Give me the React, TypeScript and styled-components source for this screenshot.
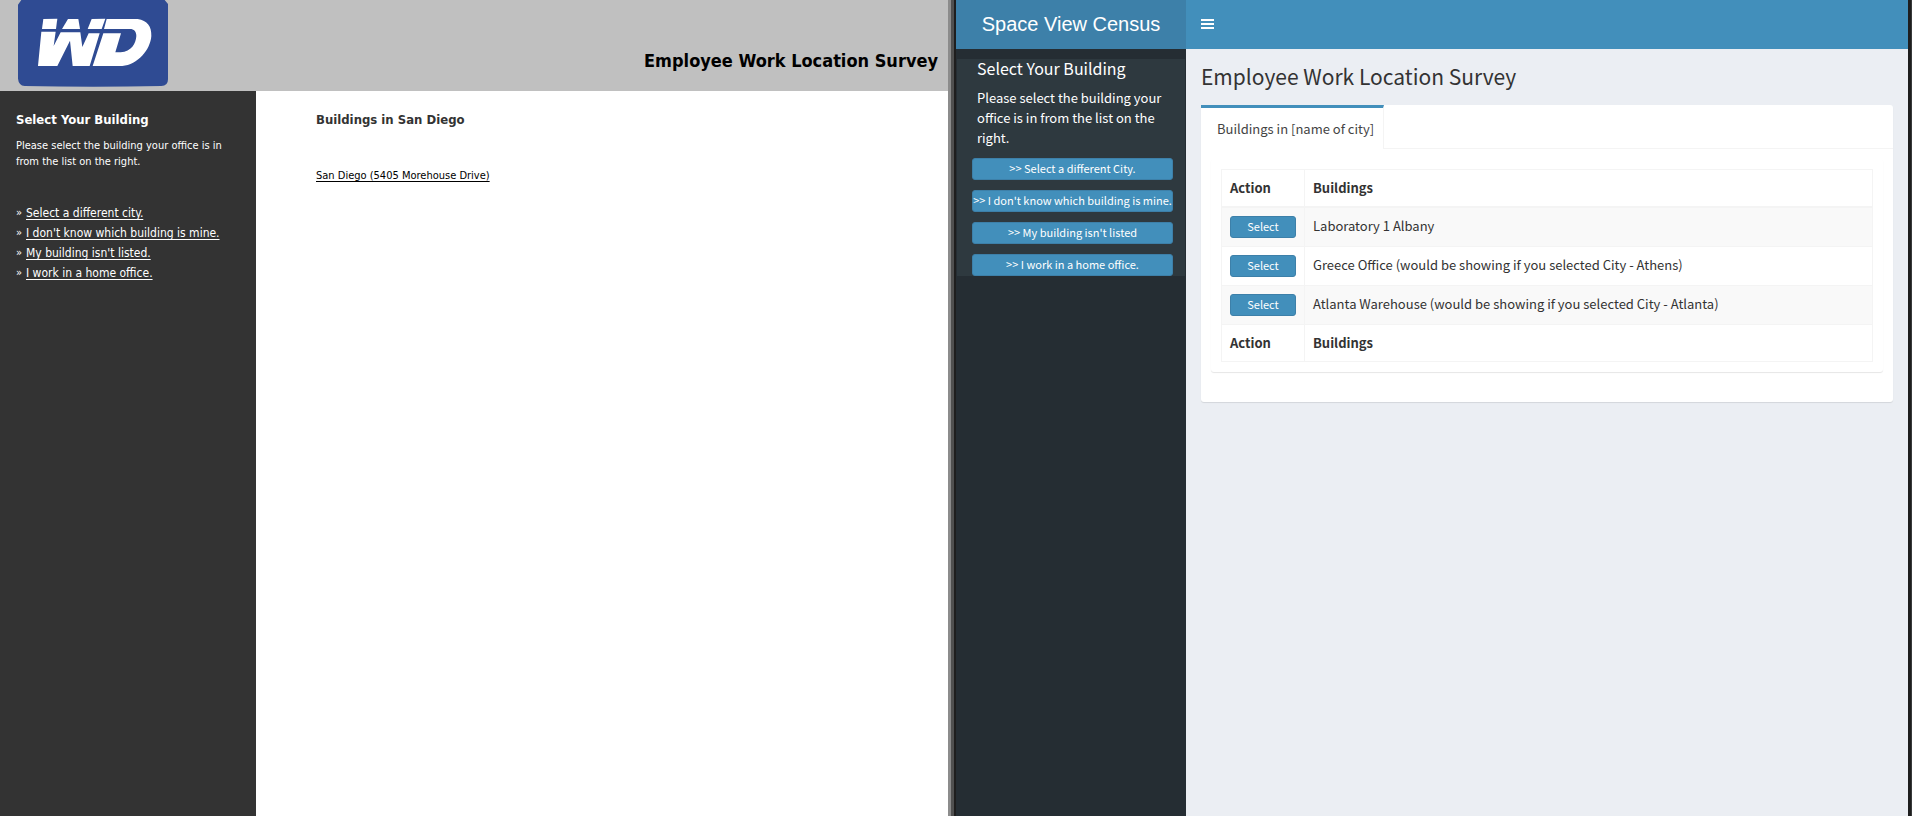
import React from 'react';
import styled, { createGlobalStyle } from 'styled-components';

const GlobalStyle = createGlobalStyle`
  *, *::before, *::after { box-sizing: border-box; }
  body { margin: 0; }
  h1, h2, h3, p, ul { margin: 0; padding: 0; }
  ul { list-style: none; }
`;

const classicFont = "'DejaVu Sans Condensed', 'DejaVu Sans', sans-serif";
const modernFont = "'Noto Sans CJK JP', 'Noto Sans', sans-serif";

const Screen = styled.div`
  display: grid;
  grid-template-columns: minmax(0, 948fr) 8px minmax(0, 952fr) 4px;
  min-height: 100vh;
`;

const Divider = styled.div`
  background: #505050;
  border-left: 3px solid #8c8c8c;
  border-right: 2px solid #1e1e1e;
`;

const Edge = styled.div`
  background: #383a3b;
  border-left: 3px solid #1e1e1e;
`;

/* Classic survey */

const ClassicPane = styled.section`
  display: flex;
  flex-direction: column;
  background: #fff;
  font-family: ${classicFont};
`;

const ClassicHeader = styled.header`
  display: flex;
  justify-content: space-between;
  height: 91px;
  padding: 0 10px 0 18px;
  background: #c0c0c0;
`;

const ClassicTitle = styled.h1`
  align-self: flex-end;
  padding-bottom: 19px;
  color: #000;
  font-size: 18px;
  font-weight: 700;
  line-height: 22px;
`;

const ClassicBody = styled.div`
  display: flex;
  flex: 1;
`;

const ClassicSidebar = styled.aside`
  flex: none;
  width: 256px;
  padding: 20px 16px;
  background: #333;
  color: #fff;
`;

const ClassicHeading = styled.h2<{ $dark?: boolean }>`
  color: ${(p) => (p.$dark ? '#333' : '#fff')};
  font-size: 13px;
  font-weight: 700;
  line-height: 18px;
`;

const ClassicText = styled.p`
  margin-top: 9px;
  font-size: 11px;
  line-height: 16px;
  white-space: nowrap;
`;

const LinkList = styled.ul`
  margin-top: 33px;
  font-size: 12px;
  line-height: 20px;
  white-space: nowrap;
`;

const LinkItem = styled.li`
  display: flex;
  gap: 4px;
`;

const Marker = styled.span`
  width: 6px;
  font-size: 11px;
`;

const ClassicLink = styled.a<{ $dark?: boolean }>`
  color: ${(p) => (p.$dark ? '#000' : '#fff')};
  text-decoration: underline;
  text-decoration-skip-ink: none;
  text-underline-offset: 2px;
`;

const ClassicMain = styled.main`
  flex: 1;
  padding: 20px 60px;
`;

const BuildingLine = styled.p`
  margin-top: 39px;
  font-size: 11px;
  line-height: 16px;
`;

/* Redesigned survey */

const ModernPane = styled.section`
  display: grid;
  grid-template-columns: 230px minmax(0, 1fr);
  grid-template-rows: 49px 1fr;
  background: #ebeef3;
  color: #333;
  font-family: ${modernFont};
  font-size: 13px;
  line-height: 20px;
`;

const Brand = styled.div`
  background: #3d80a9;
  color: #fff;
  font-family: 'Liberation Sans', Arial, sans-serif;
  font-size: 20px;
  line-height: 48px;
  text-align: center;
`;

const TopBar = styled.header`
  display: flex;
  align-items: center;
  padding-left: 15px;
  background: #428fbb;
`;

const MenuButton = styled.button`
  display: flex;
  padding: 0;
  border: 0;
  background: none;
  color: #fff;
`;

const ModernSidebar = styled.aside`
  padding: 10px 1px;
  background: #252d33;
`;

const Panel = styled.div`
  padding: 0 12px 0 15px;
  background: #2e393f;
  color: #fff;
`;

const PanelHeading = styled.h2`
  padding-left: 5px;
  font-size: 16px;
  font-weight: 400;
  line-height: 18px;
`;

const PanelText = styled.p`
  padding: 11px 0 10px 5px;
`;

const PanelActions = styled.div`
  display: flex;
  flex-direction: column;
  gap: 10px;
`;

const BlueButton = styled.button<{ $fixed?: boolean }>`
  display: block;
  width: ${(p) => (p.$fixed ? '66px' : '100%')};
  height: 22px;
  padding: 0 0 2px;
  border: 1px solid #3d80a9;
  border-radius: 3px;
  background: #428fbb;
  color: #fff;
  font-family: inherit;
  font-size: 11px;
  line-height: 18px;
  text-align: center;
  white-space: nowrap;
`;

const Content = styled.main`
  padding: 14px 15px;
`;

const PageTitle = styled.h1`
  font-size: 21px;
  font-weight: 400;
  line-height: 26px;
`;

const TabCard = styled.div`
  margin-top: 16px;
  border-radius: 3px;
  background: #fff;
  box-shadow: 0 1px 1px rgba(0, 0, 0, 0.1);
`;

const TabBar = styled.div`
  display: flex;
  height: 44px;
  border-bottom: 1px solid #f4f4f4;
`;

const Tab = styled.button`
  width: 183px;
  height: 44px;
  padding: 1px 0 0 16px;
  border: 0;
  border-top: 3px solid #428fbb;
  border-right: 1px solid #f4f4f4;
  background: #fff;
  color: #444;
  font-family: inherit;
  font-size: 13px;
  line-height: 20px;
  text-align: left;
  white-space: nowrap;
`;

const TabContent = styled.div`
  padding: 10px 10px 30px;
`;

const Box = styled.div`
  padding: 10px;
  border-radius: 3px;
  background: #fff;
  box-shadow: 0 1px 1px rgba(0, 0, 0, 0.1);
`;

const BuildingTable = styled.table`
  width: 100%;
  border-collapse: collapse;
  table-layout: fixed;

  th, td {
    padding: 8px;
    border: 1px solid #f4f4f4;
    text-align: left;
    vertical-align: top;
  }
  th { font-weight: 700; }
  th:first-child { width: 83px; }
  thead th { border-bottom-width: 2px; }
  tbody tr:nth-child(odd) { background: #f9f9f9; }
`;

const WdLogo = () => (
  <svg width="150" height="87" viewBox="24 0 450 261" role="img" aria-label="WD">
    <path fill="#2f4b93" d="M34 0H464L474 12V238Q474 258 454 258Q250 263 44 258Q26 256 24 236V14Z" />
    <g fill="#fff">
      <path d="M100 57L142 56L138 87H96Z" />
      <path d="M174 57H205L210 87H156Z" />
      <path d="M245 57L286 56L275 87H233Z" />
      <path d="M94 95H137L131 138L152 97H211L217 141L236 100H269L239 198H188L180 122L142 198H84Z" />
      <path d="M290 57H383C412 61 425 80 424 108C421 150 383 194 337 198H248L280 100H333L316 157H332C364 155 378 130 379 108C379 94 372 87 360 87H282Z" />
    </g>
  </svg>
);

const MenuIcon = () => (
  <svg width="13" height="12" viewBox="0 0 13 12" fill="currentColor" aria-hidden="true">
    <rect width="13" height="2" />
    <rect y="4" width="13" height="2" />
    <rect y="8" width="13" height="2" />
  </svg>
);

const classicLinks = [
  'Select a different city.',
  "I don't know which building is mine.",
  "My building isn't listed.",
  'I work in a home office.',
];

const panelActions = [
  '>> Select a different City.',
  ">> I don't know which building is mine.",
  ">> My building isn't listed",
  '>> I work in a home office.',
];

const buildings = [
  'Laboratory 1 Albany',
  'Greece Office (would be showing if you selected City - Athens)',
  'Atlanta Warehouse (would be showing if you selected City - Atlanta)',
];

const ClassicSurvey = () => (
  <ClassicPane>
    <ClassicHeader>
      <WdLogo />
      <ClassicTitle>Employee Work Location Survey</ClassicTitle>
    </ClassicHeader>
    <ClassicBody>
      <ClassicSidebar>
        <ClassicHeading>Select Your Building</ClassicHeading>
        <ClassicText>
          Please select the building your office is in
          <br />
          from the list on the right.
        </ClassicText>
        <LinkList>
          {classicLinks.map((label) => (
            <LinkItem key={label}>
              <Marker>»</Marker>
              <ClassicLink href="#">{label}</ClassicLink>
            </LinkItem>
          ))}
        </LinkList>
      </ClassicSidebar>
      <ClassicMain>
        <ClassicHeading $dark>Buildings in San Diego</ClassicHeading>
        <BuildingLine>
          <ClassicLink $dark href="#">San Diego (5405 Morehouse Drive)</ClassicLink>
        </BuildingLine>
      </ClassicMain>
    </ClassicBody>
  </ClassicPane>
);

const HeadingRow = () => (
  <tr>
    <th scope="col">Action</th>
    <th scope="col">Buildings</th>
  </tr>
);

const ModernSurvey = () => (
  <ModernPane>
    <Brand>Space View Census</Brand>
    <TopBar>
      <MenuButton type="button" aria-label="Toggle navigation">
        <MenuIcon />
      </MenuButton>
    </TopBar>
    <ModernSidebar>
      <Panel>
        <PanelHeading>Select Your Building</PanelHeading>
        <PanelText>Please select the building your office is in from the list on the right.</PanelText>
        <PanelActions>
          {panelActions.map((label) => (
            <BlueButton key={label} type="button">{label}</BlueButton>
          ))}
        </PanelActions>
      </Panel>
    </ModernSidebar>
    <Content>
      <PageTitle>Employee Work Location Survey</PageTitle>
      <TabCard>
        <TabBar role="tablist">
          <Tab type="button" role="tab" aria-selected="true">Buildings in [name of city]</Tab>
        </TabBar>
        <TabContent role="tabpanel">
          <Box>
            <BuildingTable>
              <thead><HeadingRow /></thead>
              <tbody>
                {buildings.map((name) => (
                  <tr key={name}>
                    <td><BlueButton type="button" $fixed>Select</BlueButton></td>
                    <td>{name}</td>
                  </tr>
                ))}
              </tbody>
              <tfoot><HeadingRow /></tfoot>
            </BuildingTable>
          </Box>
        </TabContent>
      </TabCard>
    </Content>
  </ModernPane>
);

export default function App() {
  return (
    <>
      <GlobalStyle />
      <Screen>
        <ClassicSurvey />
        <Divider />
        <ModernSurvey />
        <Edge />
      </Screen>
    </>
  );
}
